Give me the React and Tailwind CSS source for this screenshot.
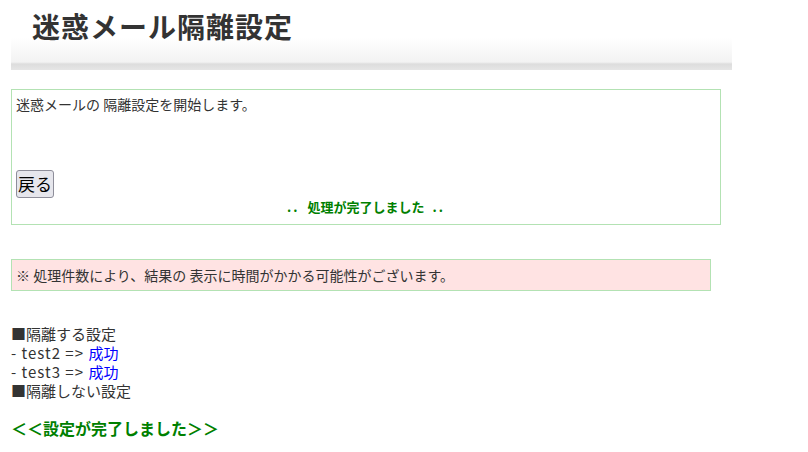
const FONT = "font-['Noto_Sans_CJK_JP','Liberation_Sans',sans-serif]";

const RESULTS = [
  { name: 'test2', status: '成功' },
  { name: 'test3', status: '成功' },
];

export default function App() {
  return (
    <div className={`${FONT} w-[808px] h-[452px] bg-white pl-[11px] text-[#333]`}>
      {/* header band */}
      <div className="w-[721px] h-[70px] bg-[linear-gradient(to_bottom,#ffffff_0px,#ffffff_38px,#f3f3f3_62px,#dddddd_64px,#e6e6e6_70px)] pl-[21px] pt-[8px]">
        <h1 className="text-[28px] leading-[36px] font-bold text-[#333] tracking-[1px]">迷惑メール隔離設定</h1>
      </div>

      {/* progress box */}
      <div className="mt-[19px] w-[710px] h-[136px] border border-[#b3e2b3] px-[4px] pt-[5px] flex flex-col">
        <p className="text-[14px] leading-[18px]">迷惑メールの 隔離設定を開始します。</p>
        <div className="mt-[57px]">
          <button
            type="button"
            className="h-[28px] px-[1px] rounded-[3px] border border-[#8e8e9a] bg-[#e6e6ec] text-[17px] leading-[22px] text-black"
          >
            戻る
          </button>
        </div>
        <p className="text-center text-[13px] leading-[18px] font-bold text-[#008000]">
          <span className="tracking-[2px]">..</span>
          <span className="mx-[8px]">処理が完了しました</span>
          <span className="tracking-[2px]">..</span>
        </p>
      </div>

      {/* notice */}
      <div className="mt-[34px] w-[700px] h-[32px] border border-[#b3e2b3] bg-[#ffe3e3] px-[4px] flex items-center">
        <p className="text-[14px] leading-[18px]">※ 処理件数により、結果の 表示に時間がかかる可能性がございます。</p>
      </div>

      {/* results */}
      <div className="mt-[33px] text-[15px] leading-[19px]">
        <p>■隔離する設定</p>
        {RESULTS.map((r) => (
          <p key={r.name}>
            <span className="tracking-[1px]">- {r.name} =&gt; </span>
            <span className="text-[#0000ff]">{r.status}</span>
          </p>
        ))}
        <p>■隔離しない設定</p>
      </div>

      <p className="mt-[18px] text-[16px] leading-[20px] font-bold text-[#008000]">＜＜設定が完了しました＞＞</p>
    </div>
  );
}
